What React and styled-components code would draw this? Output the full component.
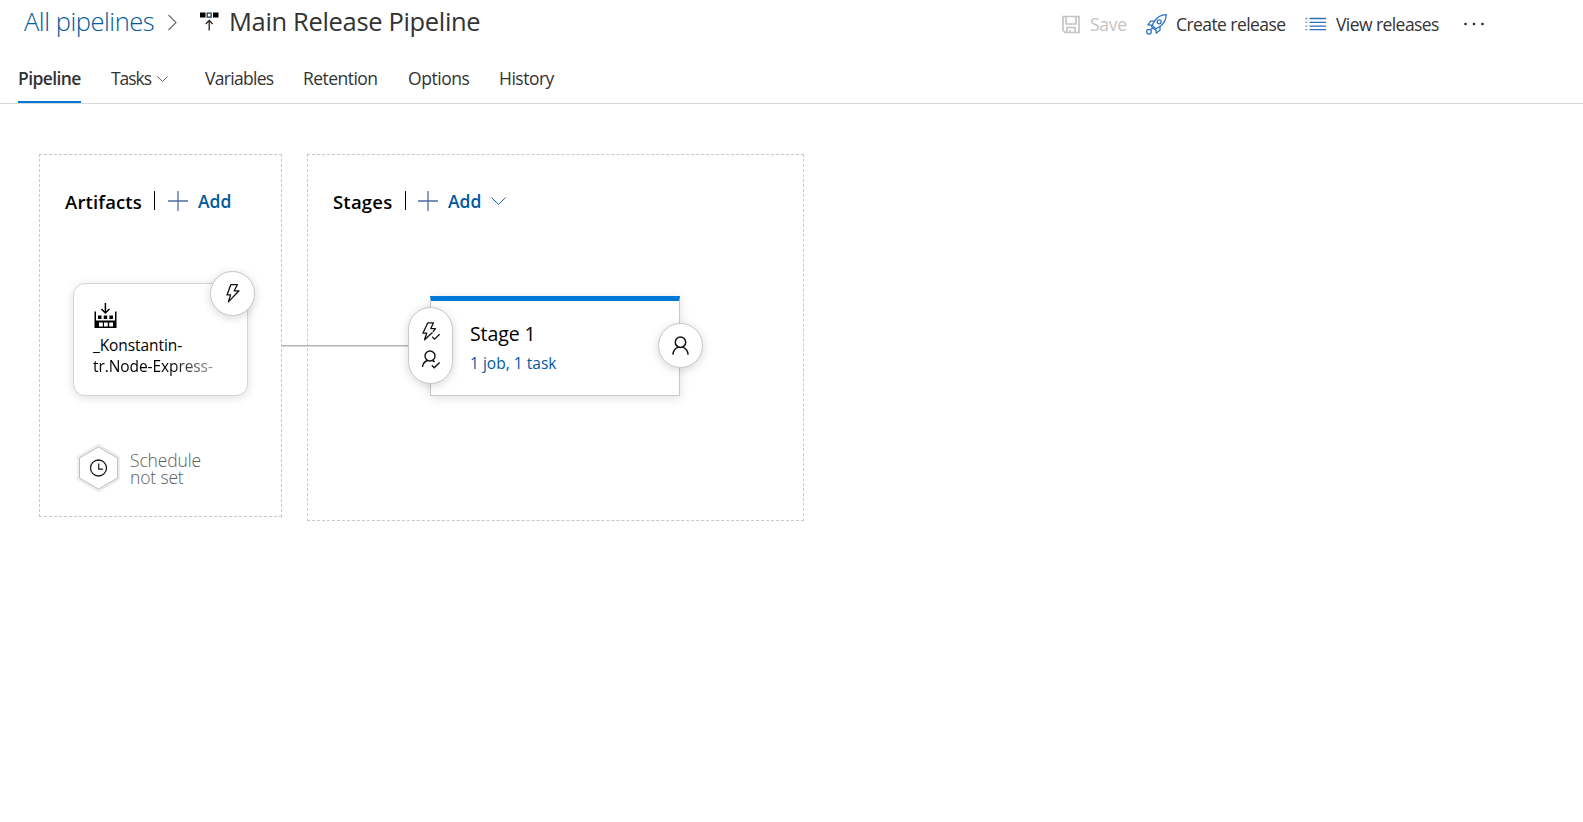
import React from 'react';
import styled, { createGlobalStyle } from 'styled-components';

const GlobalStyle = createGlobalStyle`
  * { box-sizing: border-box; }
  body {
    margin: 0;
    background: #fff;
    color: #333;
    font-family: 'Open Sans', 'Noto Sans', sans-serif;
  }
  svg { display: block; flex: none; overflow: visible; }
`;

const Page = styled.div`
  min-height: 822px;
  overflow: hidden;
`;

const Header = styled.header`
  display: flex;
  justify-content: space-between;
  align-items: flex-start;
  height: 54px;
  padding: 0 98px 0 24px;
`;

const Breadcrumb = styled.div`
  display: flex;
  align-items: center;
  height: 43px;
  font-size: 25.5px;
  line-height: 43px;
  white-space: nowrap;
`;

const CrumbLink = styled.a`
  width: 144px;
  color: #005a9e;
  font-weight: 300;
  letter-spacing: -0.45px;
`;

const CrumbIcon = styled.span`
  margin: 0 10px 0 23px;
`;

const Title = styled.span`
  letter-spacing: -0.34px;
`;

const Toolbar = styled.div`
  display: flex;
  align-items: center;
  height: 49px;
`;

const Command = styled.button`
  display: flex;
  align-items: center;
  gap: ${p => p.$gap}px;
  width: ${p => p.$width}px;
  padding: 0;
  border: 0;
  background: none;
  font: inherit;
  font-size: 17.5px;
  letter-spacing: ${p => p.$spacing}px;
  white-space: nowrap;
  color: ${p => (p.$disabled ? '#c3c3c3' : '#333')};
`;

const CommandLabel = styled.span`
  padding-bottom: 2px;
`;

const TabBar = styled.nav`
  display: flex;
  height: 50px;
  padding-left: 18px;
  border-bottom: 1px solid #d8d8d8;
`;

const Tab = styled.a`
  display: flex;
  align-items: center;
  gap: 6px;
  height: 49px;
  width: ${p => p.$width}px;
  margin-right: ${p => p.$after || 30}px;
  padding-bottom: 2px;
  font-size: 17.5px;
  font-weight: ${p => (p.$active ? 600 : 400)};
  letter-spacing: ${p => p.$spacing}px;
  white-space: nowrap;
  box-shadow: ${p => (p.$active ? 'inset 0 -2px #0078d4' : 'none')};

  svg { margin-top: 2px; }
`;

const Canvas = styled.main`
  display: flex;
  align-items: flex-start;
  gap: 25px;
  padding: 50px 39px;
`;

const Panel = styled.section`
  position: relative;
  width: ${p => p.$width}px;
  height: ${p => p.$height}px;
  padding: 35px 25px 0;
  border: 1px dashed #c8c8c8;
`;

const PanelHead = styled.div`
  display: flex;
  align-items: center;
  height: 24px;
`;

const PanelTitle = styled.h2`
  width: ${p => p.$width}px;
  margin: 0;
  font-size: 18.5px;
  font-weight: 600;
  line-height: 24px;
  letter-spacing: ${p => p.$spacing}px;
  color: #000;
`;

const Divider = styled.span`
  width: 1px;
  height: 19px;
  margin: 0 ${p => p.$after}px 3px 0;
  background: #000;
`;

const AddButton = styled.button`
  display: flex;
  align-items: center;
  gap: 10px;
  margin-bottom: 3px;
  padding: 0;
  border: 0;
  background: none;
  color: #005a9e;
  font: inherit;
  font-size: 17.5px;
  font-weight: 550;
  line-height: 24px;
  letter-spacing: 0;
`;

const ArtifactCard = styled.article`
  position: relative;
  width: 175px;
  height: 113px;
  margin: 69px 0 0 8px;
  padding: 19px 20px 0 19px;
  border: 1px solid #d4d4d4;
  border-radius: 12px;
  background: #fff;
  box-shadow: 0 2px 10px rgba(0, 0, 0, 0.13);
`;

const ArtifactIcon = styled.div`
  padding-left: 1px;
`;

const ArtifactName = styled.div`
  margin-top: 7px;
  width: 128px;
  color: #000;
  font-size: 15.5px;
  line-height: 21px;
  letter-spacing: -0.08px;
`;

const FadedLine = styled.div`
  mask-image: linear-gradient(to right, #000 60%, rgba(0, 0, 0, 0.35) 96%);
  white-space: nowrap;
`;

const Badge = styled.div`
  position: absolute;
  left: ${p => p.$left}px;
  top: ${p => p.$top}px;
  display: flex;
  flex-direction: column;
  align-items: center;
  justify-content: center;
  gap: 9px;
  width: 45px;
  height: ${p => p.$height || 45}px;
  border: 1px solid #c8c8c8;
  border-radius: 23px;
  background: #fff;
  box-shadow: 0 2px 10px rgba(0, 0, 0, 0.16);
`;

const Schedule = styled.div`
  display: flex;
  align-items: center;
  gap: 10px;
  margin: 48px 0 0 12px;
  color: #5c5c5c;
  font-size: 17.5px;
  font-weight: 300;
  line-height: 17px;
  letter-spacing: -0.15px;
`;

const ScheduleText = styled.div`
  width: 80px;
  padding-top: 1px;
`;

const Connector = styled.div`
  position: absolute;
  left: -26px;
  top: 190px;
  width: 128px;
  height: 2px;
  background: linear-gradient(#b4b4b4 50%, #dadada 50%);
`;

const StageCard = styled.article`
  position: relative;
  width: 250px;
  height: 100px;
  margin: 82px 0 0 97px;
  padding: 20px 0 0 39px;
  border: 1px solid #c8c8c8;
  border-top: 5px solid #0078d7;
  background: #fff;
  box-shadow: 0 2px 10px rgba(0, 0, 0, 0.13);
`;

const StageName = styled.div`
  color: #000;
  font-size: 19.5px;
  line-height: 26px;
  letter-spacing: -0.1px;
`;

const StageTasks = styled.a`
  display: block;
  margin-top: 4px;
  color: #005a9e;
  font-size: 15.5px;
  line-height: 24px;
  letter-spacing: 0.02px;
`;

const Stroke = ({ w, h, color = '#111', width = 1.3, children }) => (
  <svg width={w} height={h} viewBox={`0 0 ${w} ${h}`} fill="none" stroke={color} strokeWidth={width}>
    {children}
  </svg>
);

const CrumbChevron = () => (
  <Stroke w={9} h={17} color="#666" width={1.1}><path d="M.5 2 8 9.500.5 17" /></Stroke>
);

const ChevronDown = ({ w, h, color }) => (
  <Stroke w={w} h={h} color={color} width={1}><path d={`M.4.5 ${w / 2} ${h - 0.6} ${w - 0.4}.5`} /></Stroke>
);

const ReleaseIcon = () => (
  <svg width="19" height="19" viewBox="0 0 19 19">
    <path d="M0 .5h5.500v5H0zM13 .5h5.500v5H13z" fill="#000" />
    <path d="M7.200 1.200h4v4h-4z" fill="none" stroke="#1c3a52" strokeWidth="1.300" />
    <path d="M9.200 18.500V8.500M5.800 12l3.400-3.600 3.400 3.600" fill="none" stroke="#222" strokeWidth="1.300" />
  </svg>
);

const SaveIcon = () => (
  <Stroke w={18} h={18} color="#c3c3c3" width={1.6}>
    <path d="M1 .5h16v16H3.200L1 14.300zM4 .5V8h10V.5M5 16.500v-5h8v5M8 16.500V14" />
  </Stroke>
);

const RocketIcon = () => (
  <Stroke w={21} h={21} color="#2a6fc0" width={1.25}>
    <path d="M20.200.7c-5.400.1-9 2.600-11.700 6.400l-2.300 4.100 3.600 3.600 4.100-2.300c3.800-2.700 6.200-6.400 6.300-11.800z" />
    <path d="M8.600 7H4.800L2 10.700l4.200.6M14 12.300v3.900L10.300 19l-.6-4.200M5.200 12.300l3.500 3.500" />
    <circle cx="13.200" cy="7.800" r="2" />
    <circle cx="3" cy="17.700" r="2.300" />
    <path d="M5 15.500 6.600 14" />
  </Stroke>
);

const ListIcon = () => (
  <Stroke w={21} h={13} color="#2a6fc0" width={1.3}>
    <path d="M4.500.5H21M4.500 4.300H21M4.500 8.100H21M4.500 11.700H21" />
    <path d="M.3.5h2M.3 4.300h2M.3 8.100h2M.3 11.700h2" strokeOpacity=".7" />
  </Stroke>
);

const DotsIcon = () => (
  <svg width="21" height="4" viewBox="0 0 21 4" fill="#222">
    <circle cx="1.500" cy="1" r="1.300" /><circle cx="10" cy="1" r="1.300" /><circle cx="18.500" cy="1" r="1.300" />
  </svg>
);

const PlusIcon = () => (
  <Stroke w={20} h={20} color="#4f6ca5" width={1.3}><path d="M10 0v20M0 10h20" /></Stroke>
);

const BuildIcon = () => (
  <svg width="23" height="25" viewBox="0 0 23 25">
    <path fillRule="evenodd" fill="#000" d="M.5 8.500H2v9h19v-9h1.500V25H.5zM5 19.500v4h3.800v-4zM10 19.500v4h3.800v-4zM15.200 19.500v4H19v-4z" />
    <path d="M4 12.500h3.500v3.500H4zM9.700 12.500h3.500v3.500H9.700zM15.400 12.500h3.500v3.500h-3.500z" />
    <path d="M11.400 0v9.800M7.400 6l4 4 4-4" fill="none" stroke="#000" strokeWidth="1.500" />
  </svg>
);

const BoltIcon = () => (
  <Stroke w={14} h={19} width={1.3}>
    <path d="M4.800.7H11.400L8.200 6.800H13L2.400 17.900l2.200-7H1z" strokeLinejoin="round" />
  </Stroke>
);

const BoltCheckIcon = () => (
  <Stroke w={18} h={19} width={1.3}>
    <path d="M10.500 10.500 2.500 17.800l2.200-6.600H.9L5.800.8h5.700L8.800 6.600h4.700l-2.600 3.200" strokeLinejoin="round" />
    <path d="m10.200 14.800 2.400 2.400 5-5" />
  </Stroke>
);

const PersonCheckIcon = () => (
  <Stroke w={18} h={19} width={1.4}>
    <circle cx="8" cy="6" r="5" />
    <path d="M.5 17c.3-3.500 2.300-5.600 5-6.500M10.300 10.500c1 .3 1.700.8 2.300 1.400M9.800 15.300l2.400 2.400 5.400-5.200" />
  </Stroke>
);

const PersonIcon = () => (
  <Stroke w={17} h={19} width={1.5}>
    <circle cx="8.500" cy="6.200" r="5.200" />
    <path d="M.9 18.600c.3-4 2.700-6.500 5.500-7.500M16.100 18.600c-.3-4-2.700-6.500-5.500-7.500" />
  </Stroke>
);

const ScheduleIcon = () => (
  <svg width="43" height="48" viewBox="0 0 43 48" fill="none">
    <path d="M21.500 1.500 41.300 13v22L21.500 46.500 1.700 35V13z" stroke="#ebebeb" strokeWidth="3" />
    <path d="M21.500 3 40.500 14v20L21.500 45 2.500 34V14z" fill="#fff" stroke="#c0c0c0" strokeWidth="1" />
    <circle cx="21.500" cy="24" r="8" stroke="#1a1a1a" strokeWidth="1.300" />
    <path d="M21.700 19.500v5.700h4.300" stroke="#1a1a1a" strokeWidth="1.200" />
  </svg>
);

export default function App() {
  return (
    <Page>
      <GlobalStyle />
      <Header>
        <Breadcrumb>
          <CrumbLink>All pipelines</CrumbLink>
          <CrumbChevron />
          <CrumbIcon><ReleaseIcon /></CrumbIcon>
          <Title>Main Release Pipeline</Title>
        </Breadcrumb>
        <Toolbar>
          <Command $gap={10} $width={84} $spacing={-0.3} $disabled><SaveIcon /><CommandLabel>Save</CommandLabel></Command>
          <Command $gap={9} $width={159} $spacing={-0.57}><RocketIcon /><CommandLabel>Create release</CommandLabel></Command>
          <Command $gap={10} $width={159} $spacing={-0.57}><ListIcon /><CommandLabel>View releases</CommandLabel></Command>
          <Command $gap={0} $width={21} aria-label="More actions"><DotsIcon /></Command>
        </Toolbar>
      </Header>
      <TabBar>
        <Tab $width={63} $spacing={-0.6} $active>Pipeline</Tab>
        <Tab $width={58} $spacing={-1.05} $after={36}>Tasks<ChevronDown w={11} h={6} color="#666" /></Tab>
        <Tab $width={69} $spacing={-0.7} $after={29}>Variables</Tab>
        <Tab $width={75} $spacing={-0.54}>Retention</Tab>
        <Tab $width={61} $spacing={-0.45}>Options</Tab>
        <Tab $width={60} $spacing={-0.5}>History</Tab>
      </TabBar>
      <Canvas>
        <Panel $width={243} $height={363}>
          <PanelHead>
            <PanelTitle $width={89} $spacing={0.15}>Artifacts</PanelTitle>
            <Divider $after={13} />
            <AddButton><PlusIcon />Add</AddButton>
          </PanelHead>
          <ArtifactCard>
            <ArtifactIcon><BuildIcon /></ArtifactIcon>
            <ArtifactName>
              <div>_Konstantin-</div>
              <FadedLine>tr.Node-Express-</FadedLine>
            </ArtifactName>
            <Badge $left={136} $top={-13}><BoltIcon /></Badge>
          </ArtifactCard>
          <Schedule>
            <ScheduleIcon />
            <ScheduleText>Schedule not set</ScheduleText>
          </Schedule>
        </Panel>
        <Panel $width={497} $height={367}>
          <PanelHead>
            <PanelTitle $width={72} $spacing={0.2}>Stages</PanelTitle>
            <Divider $after={12} />
            <AddButton><PlusIcon />Add<ChevronDown w={15} h={8} color="#1b66a8" /></AddButton>
          </PanelHead>
          <Connector />
          <StageCard>
            <StageName>Stage 1</StageName>
            <StageTasks>1 job, 1 task</StageTasks>
            <Badge $left={-23} $top={6} $height={77}><BoltCheckIcon /><PersonCheckIcon /></Badge>
            <Badge $left={227} $top={22}><PersonIcon /></Badge>
          </StageCard>
        </Panel>
      </Canvas>
    </Page>
  );
}
